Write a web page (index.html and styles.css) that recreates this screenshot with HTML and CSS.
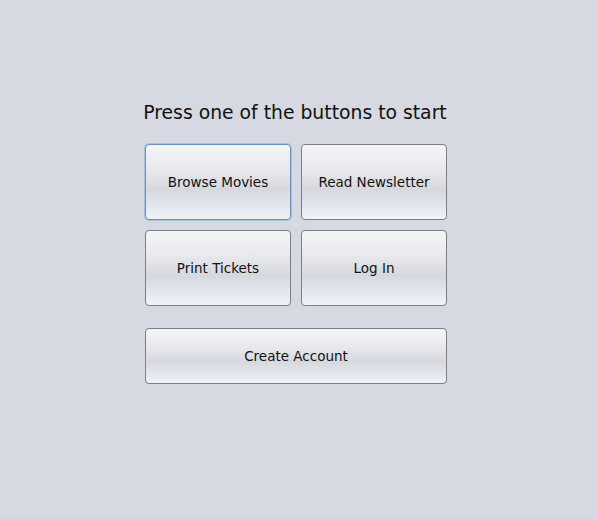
FILE: index.html
```html
<!DOCTYPE html>
<html>
<head>
<meta charset="utf-8">
<link rel="stylesheet" href="styles.css">
</head>
<body>
<div class="panel">
  <div class="title">Press one of the buttons to start</div>
  <div class="grid">
    <button class="btn focused">Browse Movies</button>
    <button class="btn">Read Newsletter</button>
    <button class="btn">Print Tickets</button>
    <button class="btn">Log In</button>
  </div>
  <button class="btn wide">Create Account</button>
</div>
</body>
</html>
```
FILE: styles.css
```css
html, body {
  margin: 0;
  padding: 0;
  background: #d6d9e2;
  height: 100%;
}
body {
  font-family: "DejaVu Sans", "Liberation Sans", sans-serif;
}
.panel {
  width: 302px;
  margin-left: 145px;
  padding-top: 99px;
  display: flex;
  flex-direction: column;
}
.title {
  align-self: center;
  font-size: 18.8px;
  color: #111;
  white-space: nowrap;
  line-height: 28px;
  margin-bottom: 17px;
  margin-left: -8px;
  margin-right: -6px;
}
.grid {
  display: grid;
  grid-template-columns: 146px 146px;
  grid-template-rows: 76px 76px;
  column-gap: 10px;
  row-gap: 10px;
}
.btn {
  font-family: "DejaVu Sans", "Liberation Sans", sans-serif;
  font-size: 13.5px;
  color: #111;
  border: 1px solid #7d7f84;
  border-radius: 4px;
  background: linear-gradient(to bottom, #f4f5f7 0%, #e6e8ec 35%, #d6d8de 60%, #e2e5ec 80%, #f1f3fa 100%);
  padding: 0;
  margin: 0;
  outline: none;
}
.btn.focused {
  border: 1px solid #6d8fbf;
  box-shadow: 0 0 0 1px #a9c1df;
}
.wide {
  margin-top: 22px;
  height: 56px;
  width: 302px;
}
```
